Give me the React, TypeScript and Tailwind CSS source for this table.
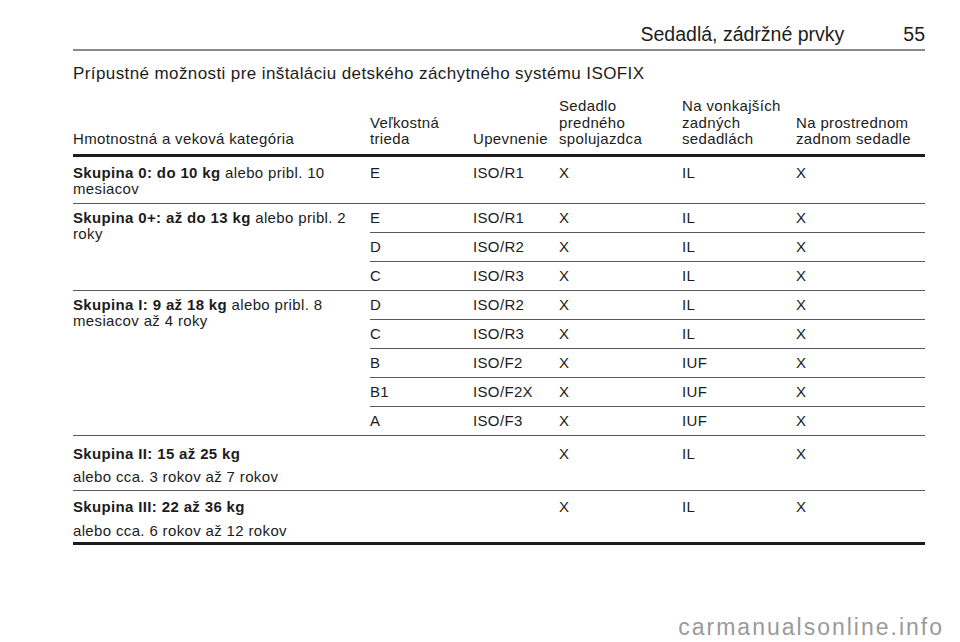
import React from 'react';

type Sub = { size: string; fix: string; front: string; outer: string; middle: string };

type Group = {
  bold: string;
  rest: string;
  split?: boolean; // second part on its own paragraph
  rows: Sub[];
};

const groups: Group[] = [
  {
    bold: 'Skupina 0: do 10 kg',
    rest: 'alebo pribl. 10 mesiacov',
    rows: [{ size: 'E', fix: 'ISO/R1', front: 'X', outer: 'IL', middle: 'X' }],
  },
  {
    bold: 'Skupina 0+: až do 13 kg',
    rest: 'alebo pribl. 2 roky',
    rows: [
      { size: 'E', fix: 'ISO/R1', front: 'X', outer: 'IL', middle: 'X' },
      { size: 'D', fix: 'ISO/R2', front: 'X', outer: 'IL', middle: 'X' },
      { size: 'C', fix: 'ISO/R3', front: 'X', outer: 'IL', middle: 'X' },
    ],
  },
  {
    bold: 'Skupina I: 9 až 18 kg',
    rest: 'alebo pribl. 8 mesiacov až 4 roky',
    rows: [
      { size: 'D', fix: 'ISO/R2', front: 'X', outer: 'IL', middle: 'X' },
      { size: 'C', fix: 'ISO/R3', front: 'X', outer: 'IL', middle: 'X' },
      { size: 'B', fix: 'ISO/F2', front: 'X', outer: 'IUF', middle: 'X' },
      { size: 'B1', fix: 'ISO/F2X', front: 'X', outer: 'IUF', middle: 'X' },
      { size: 'A', fix: 'ISO/F3', front: 'X', outer: 'IUF', middle: 'X' },
    ],
  },
  {
    bold: 'Skupina II: 15 až 25 kg',
    rest: 'alebo cca. 3 rokov až 7 rokov',
    split: true,
    rows: [{ size: '', fix: '', front: 'X', outer: 'IL', middle: 'X' }],
  },
  {
    bold: 'Skupina III: 22 až 36 kg',
    rest: 'alebo cca. 6 rokov až 12 rokov',
    split: true,
    rows: [{ size: '', fix: '', front: 'X', outer: 'IL', middle: 'X' }],
  },
];

// padding per group, so the rows fall on the same lines as the printed page
function pads(gi: number, last: boolean) {
  if (gi === 0) return 'pt-[8px] pb-[6px]';
  if (last) return 'pt-[8px] pb-[3px]';
  if (gi === 3) return 'pt-[10px] pb-[5px]';
  return 'pt-[6px] pb-[6px]';
}

export default function App() {
  return (
    <div
      className="w-[960px] h-[642px] bg-white text-[#1c1c1c] relative overflow-hidden"
      style={{ fontFamily: '"Liberation Sans", Arial, sans-serif' }}
    >
      <div className="pl-[73px] pr-[35px] pt-[22px]">
        {/* page header */}
        <div className="flex justify-end items-baseline gap-[59px] text-[19.5px] leading-[24px] pb-[3px] border-b-2 border-[#8a8a8a]">
          <span>Sedadlá, zádržné prvky</span>
          <span>55</span>
        </div>

        <h1 className="mt-[13px] text-[17px] leading-[20px] tracking-[0.4px]">
          Prípustné možnosti pre inštaláciu detského záchytného systému ISOFIX
        </h1>

        <table className="mt-[14px] w-[852px] table-fixed border-collapse text-[15px] leading-[16.5px] tracking-[0.35px]">
          <colgroup>
            <col className="w-[297px]" />
            <col className="w-[103px]" />
            <col className="w-[86px]" />
            <col className="w-[123px]" />
            <col className="w-[114px]" />
            <col className="w-[129px]" />
          </colgroup>
          <thead>
            <tr className="border-b-[3px] border-[#1c1c1c]">
              <th className="text-left font-normal align-bottom pb-[6px]">Hmotnostná a veková kategória</th>
              <th className="text-left font-normal align-bottom pb-[6px]">Veľkostná<br />trieda</th>
              <th className="text-left font-normal align-bottom pb-[6px] whitespace-nowrap">Upevnenie</th>
              <th className="text-left font-normal align-bottom pb-[6px]">Sedadlo<br />predného<br />spolujazdca</th>
              <th className="text-left font-normal align-bottom pb-[6px]">Na vonkajších<br />zadných<br />sedadlách</th>
              <th className="text-left font-normal align-bottom pb-[6px] whitespace-nowrap">Na prostrednom<br />zadnom sedadle</th>
            </tr>
          </thead>
          <tbody className="leading-[16px]">
            {groups.map((g, gi) =>
              g.rows.map((r, ri) => {
                const last = gi === groups.length - 1;
                const rowCls = `align-top pr-2 ${pads(gi, last)} ${
                  last ? 'border-b-[3px] border-[#1c1c1c]' : 'border-b border-[#5a5a5a]'
                }`;
                return (
                  <tr key={`${gi}-${ri}`}>
                    {ri === 0 && (
                      <td rowSpan={g.rows.length} className={`${rowCls} pr-4`}>
                        {g.split ? (
                          <>
                            <div className="font-bold">{g.bold}</div>
                            <div className={gi === 3 ? 'mt-[7px]' : 'mt-[8px]'}>{g.rest}</div>
                          </>
                        ) : (
                          <p>
                            <b>{g.bold}</b> {g.rest}
                          </p>
                        )}
                      </td>
                    )}
                    <td className={rowCls}>{r.size}</td>
                    <td className={`${rowCls} whitespace-nowrap`}>{r.fix}</td>
                    <td className={rowCls}>{r.front}</td>
                    <td className={rowCls}>{r.outer}</td>
                    <td className={rowCls}>{r.middle}</td>
                  </tr>
                );
              })
            )}
          </tbody>
        </table>
      </div>

      <div className="absolute right-[16px] bottom-[1px] text-[23px] leading-[28px] tracking-[2px] text-[#9a9a9a]">
        carmanualsonline.info
      </div>
    </div>
  );
}
